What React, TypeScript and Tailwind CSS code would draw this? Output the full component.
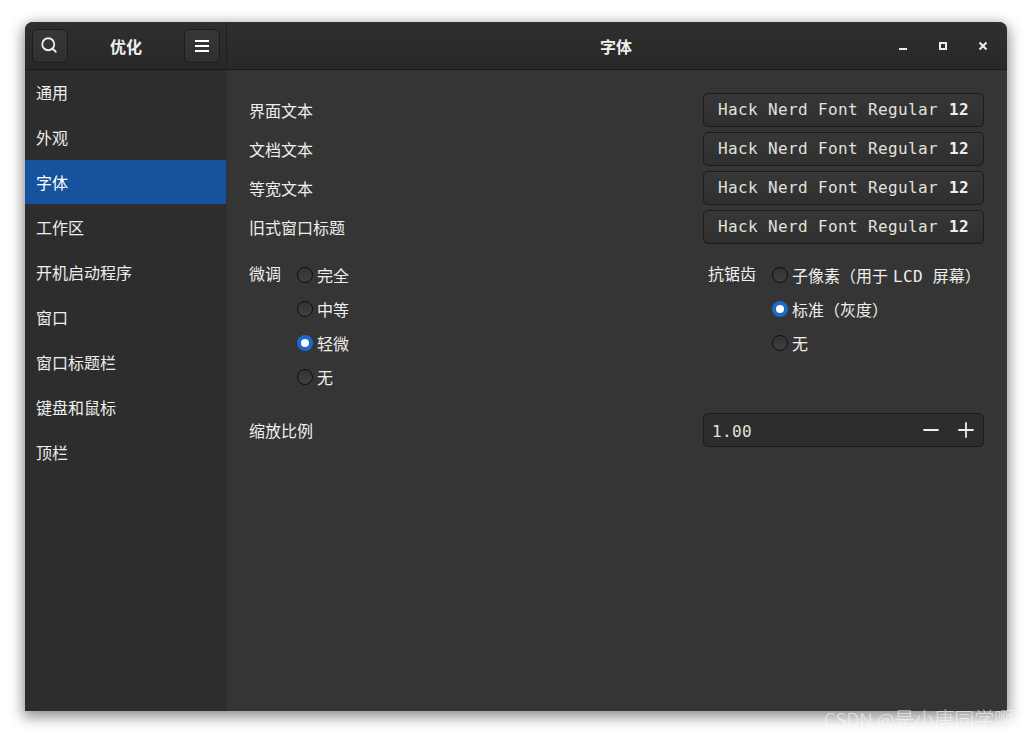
import { Minus, Plus, Search } from "lucide-react"

const sections = ["通用", "外观", "字体", "工作区", "开机启动程序", "窗口", "窗口标题栏", "键盘和鼠标", "顶栏"]

const fontRows = ["界面文本", "文档文本", "等宽文本", "旧式窗口标题"]

const hinting = [
  { label: "完全", on: false },
  { label: "中等", on: false },
  { label: "轻微", on: true },
  { label: "无", on: false },
]

const antialias = [
  {
    label: (
      <>
        子像素（用于<span className="ml-[5px] tracking-[0.37px]">LCD</span> 屏幕）
      </>
    ),
    key: "lcd",
    on: false,
  },
  { label: "标准（灰度）", key: "gray", on: true },
  { label: "无", key: "none", on: false },
]

function Radio({ label, on }: { label: React.ReactNode; on: boolean }) {
  return (
    <div className="flex h-[34px] items-start">
      {on ? (
        <span className="mt-[2px] flex h-4 w-4 items-center justify-center rounded-full bg-[#1b6acb]">
          <span className="h-2 w-2 rounded-full bg-white" />
        </span>
      ) : (
        <span className="mt-[2px] h-4 w-4 rounded-full border border-[#0f0f0f] bg-gradient-to-b from-[#333333] to-[#404040]" />
      )}
      <span className="ml-1 mt-[2px] leading-5 text-[#eeeeec]">{label}</span>
    </div>
  )
}

function HeaderButton({ children }: { children: React.ReactNode }) {
  return (
    <button
      type="button"
      className="flex h-[34px] w-9 items-center justify-center rounded-[5px] border border-[#1b1b1b] bg-gradient-to-b from-[#373737] to-[#2f2f2f] text-[#eeeeec]"
    >
      {children}
    </button>
  )
}

export default function App() {
  return (
    <div className="relative h-[739px] w-[1032px] overflow-hidden bg-white pl-[25px] pt-[22px] font-['DejaVu_Sans_Mono','Noto_Sans_CJK_SC',monospace] text-base">
      <div className="flex h-[689px] w-[982px] flex-col overflow-hidden rounded-t-[8px] bg-[#353535] shadow-[0_4px_14px_2px_rgba(0,0,0,0.45)]">
        {/* titlebar */}
        <header className="flex h-[48px] shrink-0 border-b border-[#1a1a1a] bg-gradient-to-b from-[#2f2f2f] to-[#282828]">
          <div className="flex w-[202px] shrink-0 items-center justify-between border-r border-[#1f1f1f] pl-[7px] pr-[6px] pt-[1px]">
            <HeaderButton>
              <Search className="mb-[2px] mr-[2px] h-[18px] w-[18px]" strokeWidth={2.4} />
            </HeaderButton>
            <span className="pt-[3px] font-bold text-[#eeeeec]">优化</span>
            <HeaderButton>
              <svg width="14" height="12" viewBox="0 0 14 12" fill="#ffffff">
                <rect x="0" y="0" width="14" height="2" />
                <rect x="0" y="5" width="14" height="2" />
                <rect x="0" y="10" width="14" height="2" />
              </svg>
            </HeaderButton>
          </div>
          <div className="relative flex flex-1 items-center justify-center pr-[2px] pt-[1px]">
            <span className="pt-[3px] font-bold text-[#eeeeec]">字体</span>
            <div className="absolute right-[4px] top-[4px] flex text-[#eeeeec]">
              <div className="flex h-10 w-10 items-center justify-center">
                <svg width="16" height="16" viewBox="0 0 16 16" fill="currentColor">
                  <rect x="4" y="10" width="8" height="2" />
                </svg>
              </div>
              <div className="flex h-10 w-10 items-center justify-center">
                <svg width="16" height="16" viewBox="0 0 16 16" fill="none" stroke="currentColor" strokeWidth="2">
                  <rect x="5" y="5" width="6" height="6" />
                </svg>
              </div>
              <div className="flex h-10 w-10 items-center justify-center">
                <svg width="16" height="16" viewBox="0 0 16 16" fill="none" stroke="currentColor" strokeWidth="2">
                  <path d="M4.5 4.5l7 7M11.5 4.5l-7 7" />
                </svg>
              </div>
            </div>
          </div>
        </header>

        <div className="flex flex-1">
          {/* sidebar */}
          <nav className="w-[202px] shrink-0 border-r border-[#303030] bg-[#2d2d2d]">
            {sections.map((name) => (
              <div
                key={name}
                className={
                  name === "字体"
                    ? "flex h-[45px] items-center border-b border-[#2d2d2d] bg-[#15539e] pl-[11px] pt-[4px] text-white"
                    : "flex h-[45px] items-center border-b border-[#2a2a2a] pl-[11px] pt-[4px] text-[#eeeeec]"
                }
              >
                {name}
              </div>
            ))}
          </nav>

          {/* font settings */}
          <main className="flex-1 pl-[22px] pr-[23px] pt-[23px] text-[#eeeeec]">
            <div className="flex flex-col gap-[5px]">
              {fontRows.map((label) => (
                <div key={label} className="flex h-[34px] items-center justify-between">
                  <span className="pt-[4px]">{label}</span>
                  <button
                    type="button"
                    className="flex h-[34px] w-[281px] items-center justify-between rounded-[5px] border border-[#1b1b1b] bg-gradient-to-b from-[#373737] to-[#2f2f2f] pl-[14px] pr-[14px] tracking-[0.37px]"
                  >
                    <span className="text-[#e2e2de]">Hack Nerd Font Regular</span>
                    <span className="font-bold">12</span>
                  </button>
                </div>
              ))}
            </div>

            <div className="mt-[21px] flex justify-between">
              <div className="flex">
                <span className="w-[48px] leading-5">微调</span>
                <div className="flex flex-col">
                  {hinting.map((o) => (
                    <Radio key={o.label} label={o.label} on={o.on} />
                  ))}
                </div>
              </div>
              <div className="flex w-[276px]">
                <span className="w-[64px] leading-5">抗锯齿</span>
                <div className="flex flex-col">
                  {antialias.map((o) => (
                    <Radio key={o.key} label={o.label} on={o.on} />
                  ))}
                </div>
              </div>
            </div>

            <div className="mt-[12px] flex items-center justify-between">
              <span className="pt-[4px]">缩放比例</span>
              <div className="flex h-[34px] w-[281px] items-stretch overflow-hidden rounded-[5px] border border-[#1b1b1b] bg-[#2d2d2d]">
                <span className="flex flex-1 items-center pl-2 pt-[4px] tracking-[0.37px] text-[#e2e2de]">1.00</span>
                <span className="flex w-9 items-center justify-center border-l border-[#2a2a2a]">
                  <Minus className="h-6 w-6" strokeWidth={1.8} />
                </span>
                <span className="flex w-[35px] items-center justify-center border-l border-[#2a2a2a]">
                  <Plus className="h-6 w-6" strokeWidth={1.8} />
                </span>
              </div>
            </div>
          </main>
        </div>
      </div>

      {/* watermark */}
      <div className="absolute left-[824px] top-[706px] flex items-center whitespace-nowrap font-['Noto_Sans_CJK_SC',sans-serif] text-[20px] font-light leading-[26px] text-white/60">
        <span className="whitespace-pre text-[19px]">CSDN @</span>
        <span>是小唐同学啊</span>
      </div>
    </div>
  )
}
